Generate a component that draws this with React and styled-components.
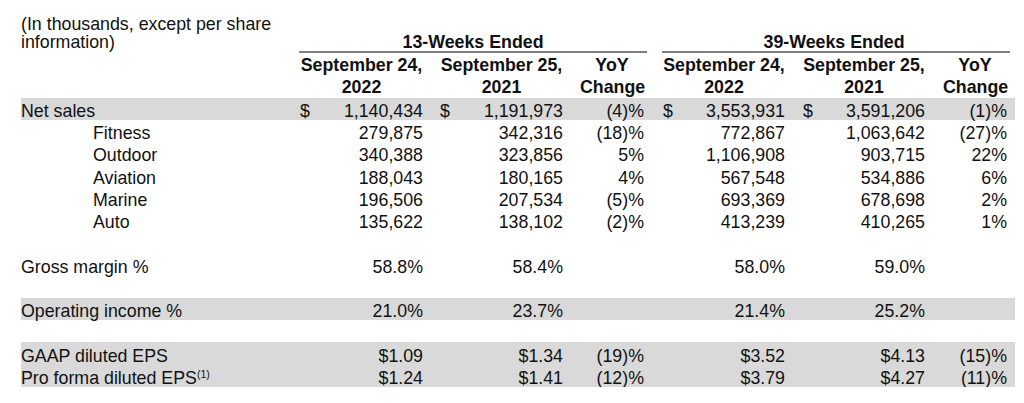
import React from 'react';
import styled, { createGlobalStyle } from 'styled-components';

const GlobalStyle = createGlobalStyle`
  body {
    margin: 0;
    background: #fff;
    color: #111;
    font-family: "Liberation Sans", Arial, sans-serif;
  }
`;

// widths of label + six value columns, shared by header and rows
const COLS = '278px 128px 140px 81px 141px 140px 86px';
const PADS = [[1, 4], [13, 4], [13, 4], [15, 4], [14, 4], [14, 8]];

const Page = styled.div`
  width: 994px;
  padding-left: 21px;
  font-size: 17.8px;
`;

const Header = styled.div`
  display: grid;
  grid-template-columns: ${COLS};
  grid-template-rows: 30.75px 22.25px 22.25px 22.25px;
`;

const Note = styled.div`
  grid-column: 1;
  grid-row: 1 / span 2;
  padding-top: 14.5px;
  line-height: 18px;
`;

const GroupHead = styled.div`
  grid-column: ${p => p.$col} / span 3;
  grid-row: 2;
  margin-left: ${p => p.$ml}px;
  margin-right: ${p => p.$mr}px;
  padding-right: ${p => p.$tpr}px;
  padding-top: 3.6px;
  line-height: 17px;
  font-weight: 700;
  text-align: center;
  border-bottom: 2px solid #808080;
  box-sizing: border-box;
`;

const ColHead = styled.div`
  grid-column: ${p => p.$col};
  grid-row: 3 / span 2;
  padding: 1.2px ${p => p.$pr}px 0 ${p => p.$pl}px;
  line-height: 22.25px;
  font-weight: 700;
  text-align: center;
`;

const Row = styled.div`
  display: grid;
  grid-template-columns: ${COLS};
  height: 22.25px;
  background: ${p => (p.$shade ? '#d9d9d9' : 'transparent')};
`;

const Label = styled.div`
  padding: 4.3px 0 0 ${p => (p.$indent ? 72 : 0)}px;
  line-height: 18px;
  white-space: nowrap;
`;

const Value = styled.div`
  display: flex;
  justify-content: space-between;
  padding: 4.3px ${p => p.$pr}px 0 ${p => p.$pl}px;
  line-height: 18px;
  white-space: nowrap;
`;

const Sup = styled.sup`
  font-size: 10.5px;
  line-height: 0;
  vertical-align: 6px;
`;

const heads = [
  ['September 24,', '2022'],
  ['September 25,', '2021'],
  ['YoY', 'Change'],
  ['September 24,', '2022'],
  ['September 25,', '2021'],
  ['YoY', 'Change'],
];

const rows = [
  { label: 'Net sales', shade: true, vals: [['$', '1,140,434'], ['$', '1,191,973'], '(4)%', ['$', '3,553,931'], ['$', '3,591,206'], '(1)%'] },
  { label: 'Fitness', indent: true, vals: ['279,875', '342,316', '(18)%', '772,867', '1,063,642', '(27)%'] },
  { label: 'Outdoor', indent: true, vals: ['340,388', '323,856', '5%', '1,106,908', '903,715', '22%'] },
  { label: 'Aviation', indent: true, vals: ['188,043', '180,165', '4%', '567,548', '534,886', '6%'] },
  { label: 'Marine', indent: true, vals: ['196,506', '207,534', '(5)%', '693,369', '678,698', '2%'] },
  { label: 'Auto', indent: true, vals: ['135,622', '138,102', '(2)%', '413,239', '410,265', '1%'] },
  { label: '', vals: [] },
  { label: 'Gross margin %', vals: ['58.8%', '58.4%', '', '58.0%', '59.0%', ''] },
  { label: '', vals: [] },
  { label: 'Operating income %', shade: true, vals: ['21.0%', '23.7%', '', '21.4%', '25.2%', ''] },
  { label: '', vals: [] },
  { label: 'GAAP diluted EPS', shade: true, vals: ['$1.09', '$1.34', '(19)%', '$3.52', '$4.13', '(15)%'] },
  { label: 'Pro forma diluted EPS', sup: '(1)', shade: true, vals: ['$1.24', '$1.41', '(12)%', '$3.79', '$4.27', '(11)%'] },
];

export default function App() {
  return (
    <Page>
      <GlobalStyle />
      <Header>
        <Note>
          (In thousands, except per share
          <br />
          information)
        </Note>
        <GroupHead $col={2} $ml={0} $mr={1} $tpr={0}>13-Weeks Ended</GroupHead>
        <GroupHead $col={5} $ml={14} $mr={5} $tpr={4}>39-Weeks Ended</GroupHead>
        {heads.map((h, i) => (
          <ColHead key={i} $col={i + 2} $pl={PADS[i][0]} $pr={PADS[i][1]}>
            {h[0]}
            <br />
            {h[1]}
          </ColHead>
        ))}
      </Header>
      {rows.map((r, ri) => (
        <Row key={ri} $shade={r.shade}>
          <Label $indent={r.indent}>
            {r.label}
            {r.sup && <Sup>{r.sup}</Sup>}
          </Label>
          {r.vals.map((v, i) => (
            <Value key={i} $pl={PADS[i][0]} $pr={PADS[i][1]}>
              {Array.isArray(v) ? (
                <>
                  <span>{v[0]}</span>
                  <span>{v[1]}</span>
                </>
              ) : (
                <>
                  <span />
                  <span>{v}</span>
                </>
              )}
            </Value>
          ))}
        </Row>
      ))}
    </Page>
  );
}
